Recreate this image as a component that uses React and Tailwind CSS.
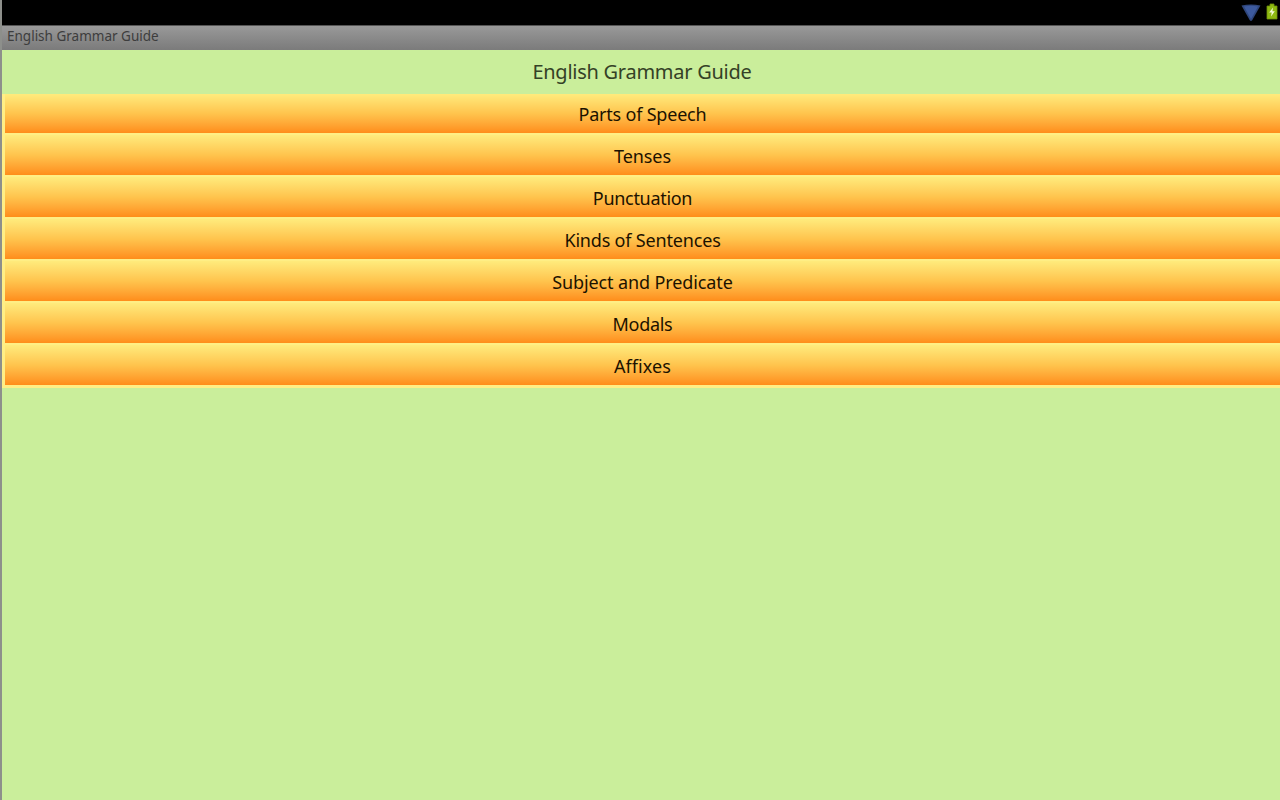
const topics = [
  { label: 'Parts of Speech', spacing: 'tracking-[-0.2px]' },
  { label: 'Tenses', spacing: 'tracking-[-0.1px]' },
  { label: 'Punctuation', spacing: 'tracking-[-0.3px]' },
  { label: 'Kinds of Sentences', spacing: 'tracking-[-0.18px]' },
  { label: 'Subject and Predicate', spacing: 'tracking-[-0.12px]' },
  { label: 'Modals', spacing: 'tracking-[-0.3px]' },
  { label: 'Affixes', spacing: 'tracking-[0.1px]' },
]

function StatusBar() {
  return (
    <div className="flex h-[25px] shrink-0 items-start justify-end bg-black">
      <svg className="mt-[4px] mr-[5px] h-[18px] w-[20px]" viewBox="0 0 20 18">
        <path d="M0.5 1.5Q10 -0.5 19.5 1.5L11.2 16.2Q10 17.6 8.8 16.2Z" fill="#2f467c" />
        <path d="M3 2.5Q10 1 17 2.5L10 15Z" fill="#3d5a9e" />
      </svg>
      <svg className="mt-[3px] mr-[2px] h-[17px] w-[12px]" viewBox="0 0 12 17">
        <path d="M4 1H8V3H11V16H1V3H4Z" fill="#8fb912" stroke="#6f9208" strokeWidth="0.8" />
        <path d="M7 4.5L3.2 9.6H5.7L5 13.5L8.8 8.2H6.4Z" fill="#f4fbd8" />
      </svg>
    </div>
  )
}

function TitleBar() {
  return (
    <div className="h-[25px] shrink-0 border-t border-[#555555] bg-gradient-to-b from-[#999999] to-[#7b7b7b] pl-[5px]">
      <p className="text-[13.5px] leading-[20px] text-[#3d3d3d]">English Grammar Guide</p>
    </div>
  )
}

export default function App() {
  return (
    <div className="flex h-screen w-screen flex-col overflow-hidden border-l-2 border-[#8d8f8b] bg-[#caee9b] font-['Noto_Sans',sans-serif]">
      <StatusBar />
      <TitleBar />
      <h1 className="h-[44px] shrink-0 pl-[2px] text-center text-[20px] leading-[43px] tracking-[-0.26px] text-[#344126]">
        English Grammar Guide
      </h1>
      <div className="flex shrink-0 flex-col border-b-3 border-l-3 border-[#ffee85]">
        {topics.map(({ label, spacing }, i) => (
          <button
            key={label}
            className={`flex w-full items-center justify-center bg-gradient-to-b from-[#ffeb7c] via-[#ffc44d] to-[#ff8d19] text-[18px] leading-[24px] text-[#1c1200] ${spacing} ${
              i === 0 ? 'h-[39px] pt-px' : 'h-[42px] border-t-2 border-[#ffee85] pt-[2px]'
            }`}
          >
            {label}
          </button>
        ))}
      </div>
    </div>
  )
}
